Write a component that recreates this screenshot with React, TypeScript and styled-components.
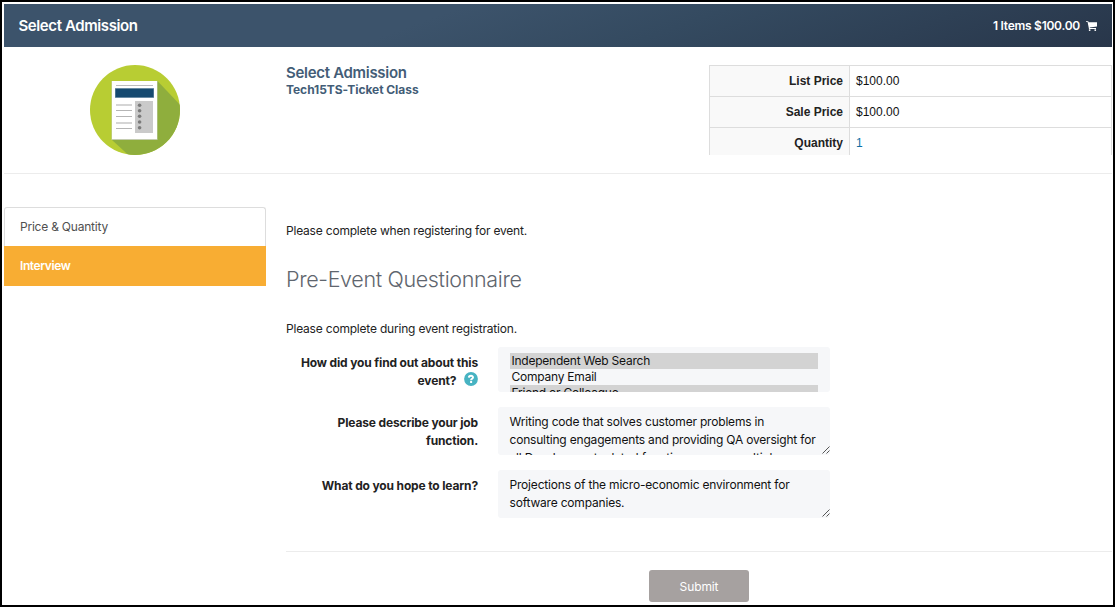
import React from "react";
import styled, { createGlobalStyle } from "styled-components";

const Global = createGlobalStyle`
  * { box-sizing: border-box; }
  html, body { margin: 0; padding: 0; }
  body {
    background: #fff;
    color: #222;
    font-family: Inter, "Liberation Sans", sans-serif;
    font-size: 12px;
    line-height: 18px;
    overflow: hidden;
  }
`;

const Frame = styled.div`
  width: 1115px;
  height: 607px;
  border: 2px solid #000;
  padding: 2px 1px 0 2px;
  overflow: hidden;
`;

const Header = styled.header`
  display: flex;
  justify-content: space-between;
  align-items: center;
  width: 1108px;
  height: 43px;
  padding: 0 15px 0 14.5px;
  color: #fff;
  background: linear-gradient(160deg, #3c536b 0%, #3c536b 38%, #344a60 60%, #28364a 100%);
`;

const HeaderTitle = styled.h1`
  margin: 0;
  font-size: 15px;
  font-weight: 600;
  letter-spacing: -0.4px;
`;

const Cart = styled.div`
  display: flex;
  align-items: center;
  gap: 6px;
  font-size: 12px;
  font-weight: 600;
  letter-spacing: -0.26px;
`;

const Product = styled.section`
  display: grid;
  grid-template-columns: 282px 1fr 403px;
  height: 127px;
  padding-top: 18px;
  border-bottom: 1px solid #ececec;
`;

const Badge = styled.svg`
  display: block;
  margin-left: 86px;
`;

const ProductName = styled.h2`
  margin: -1px 0 0;
  color: #435d77;
  font-size: 15px;
  line-height: 18px;
  font-weight: 600;
  letter-spacing: -0.3px;
`;

const ProductClass = styled.div`
  color: #435d77;
  font-size: 12px;
  line-height: 16px;
  font-weight: 700;
  letter-spacing: -0.05px;
`;

const PriceTable = styled.div`
  height: 90px;
  overflow: hidden;
  border: 1px solid #ddd;
  border-bottom: 0;
  font-family: "Liberation Sans", Arial, sans-serif;
  font-size: 12px;
`;

const PriceRow = styled.div`
  display: grid;
  grid-template-columns: 140px 1fr;
  height: 31px;
  line-height: 30px;
  border-bottom: 1px solid #ddd;
`;

const PriceLabel = styled.div`
  padding-right: 6px;
  text-align: right;
  font-weight: 700;
  background: #f9f9f9;
  border-right: 1px solid #ddd;
`;

const PriceValue = styled.div<{ $link?: boolean }>`
  padding-left: 6px;
  color: ${(p) => (p.$link ? "#0d6fa5" : "#111")};
`;

const Body = styled.div`
  display: grid;
  grid-template-columns: 262px 1fr;
  column-gap: 20px;
  padding-top: 33px;
`;

const Nav = styled.nav`
  display: flex;
  flex-direction: column;
`;

const NavItem = styled.div<{ $active?: boolean }>`
  height: ${(p) => (p.$active ? 40 : 39)}px;
  padding-left: ${(p) => (p.$active ? 16 : 15)}px;
  line-height: ${(p) => (p.$active ? 39 : 37)}px;
  letter-spacing: ${(p) => (p.$active ? -0.4 : -0.22)}px;
  color: ${(p) => (p.$active ? "#fff" : "#505050")};
  font-weight: ${(p) => (p.$active ? 600 : 400)};
  background: ${(p) => (p.$active ? "#f8ad33" : "#fff")};
  border: ${(p) => (p.$active ? "0" : "1px solid #ddd")};
  border-bottom: 0;
  border-radius: ${(p) => (p.$active ? "0" : "3px 3px 0 0")};
`;

const Content = styled.main`
  padding-top: 15px;
`;

const Note = styled.p`
  margin: 0;
  letter-spacing: -0.2px;
`;

const Heading = styled.h3`
  margin: 22px 0 24px;
  color: #5f666e;
  font-size: 21.5px;
  line-height: 34px;
  font-weight: 300;
  letter-spacing: -0.35px;
`;

const Form = styled.div`
  display: grid;
  grid-template-columns: 192px 332px;
  column-gap: 20px;
  row-gap: 15px;
  margin-top: 9px;
`;

const Label = styled.label`
  padding-top: 7px;
  text-align: right;
  font-weight: 700;
  letter-spacing: -0.15px;
`;

const Help = styled.svg`
  margin-left: 5px;
  vertical-align: -1px;
`;

const MultiSelect = styled.div`
  height: 45px;
  padding: 6px 12px 0;
  overflow: hidden;
  color: #111;
  background: #f6f7f9;
  border-radius: 3px;
`;

const Option = styled.div<{ $selected?: boolean }>`
  height: 16px;
  padding-left: 1.5px;
  line-height: 16px;
  letter-spacing: -0.23px;
  background: ${(p) => (p.$selected ? "#d3d3d3" : "transparent")};
`;

const TextBox = styled.div`
  position: relative;
  height: 48px;
  padding: 6px 0 0 11.5px;
  overflow: hidden;
  white-space: pre;
  color: #111;
  letter-spacing: -0.19px;
  background: #f6f7f9;
  border-radius: 3px;
`;

const Grip = styled.svg`
  position: absolute;
  right: 0;
  bottom: 1px;
`;

const Actions = styled.div`
  display: flex;
  margin-top: 33px;
  padding: 18px 0 0 363px;
  border-top: 1px solid #ececec;
`;

const Submit = styled.button`
  width: 100px;
  height: 32px;
  padding: 0;
  border: 0;
  border-radius: 3px;
  color: #fff;
  background: #a6a1a0;
  font: 400 12px Inter, "Liberation Sans", sans-serif;
  letter-spacing: -0.1px;
`;

const ResizeGrip = () => (
  <Grip width="8" height="8" viewBox="0 0 8 8" stroke="#555" strokeWidth="1">
    <path d="M0.5 7.5L7.5 0.5M4.5 7.5L7.5 4.5" />
  </Grip>
);

const prices = [
  { label: "List Price", value: "$100.00" },
  { label: "Sale Price", value: "$100.00" },
  { label: "Quantity", value: "1", link: true },
];

export default function App() {
  return (
    <>
      <Global />
      <Frame>
        <Header>
          <HeaderTitle>Select Admission</HeaderTitle>
          <Cart>
            <span>1 Items $100.00</span>
            <svg width="11" height="10" viewBox="0 0 11 10" fill="#fff">
              <path d="M0 .2h2.3l.3 1H11v4.3L3.7 6.4l.2.7H10v.9H3L1.6 1.1H0z" />
              <rect x="2.8" y="8.2" width="1.7" height="1.7" rx=".6" />
              <rect x="8.4" y="8.2" width="1.7" height="1.7" rx=".6" />
            </svg>
          </Cart>
        </Header>

        <Product>
          <Badge width="90" height="90" viewBox="0 0 90 90">
            <defs>
              <clipPath id="disc">
                <circle cx="45" cy="45" r="45" />
              </clipPath>
            </defs>
            <circle cx="45" cy="45" r="45" fill="#b8cd33" />
            <path clipPath="url(#disc)" d="M67.5 16L97 47V97H46L22 75z" fill="#8fae3d" />
            <rect x="21.5" y="16" width="46" height="59" fill="#c5cdb0" />
            <rect x="22" y="16" width="45" height="58" fill="#fff" />
            <path d="M26 20.5h37" stroke="#bcbcbc" />
            <rect x="25" y="23" width="39" height="10" fill="#7f9cb2" />
            <rect x="25.5" y="23.8" width="38" height="8.4" fill="#164a70" />
            <path d="M26 45.5h16M26 51.5h16M26 63.5h16" stroke="#b5b5b5" />
            <path d="M26 40h16M26 58h16" stroke="#d5d5d5" strokeWidth="2" />
            <rect x="45" y="36" width="18" height="32" fill="#cacaca" />
            <g fill="#7b7b7b">
              <circle cx="49.6" cy="40.3" r="1.8" />
              <circle cx="49.6" cy="45.7" r="1.8" />
              <circle cx="49.6" cy="51.2" r="1.8" />
              <circle cx="49.6" cy="57" r="1.8" />
              <circle cx="49.6" cy="62.8" r="1.8" />
            </g>
          </Badge>
          <div>
            <ProductName>Select Admission</ProductName>
            <ProductClass>Tech15TS-Ticket Class</ProductClass>
          </div>
          <PriceTable>
            {prices.map((p) => (
              <PriceRow key={p.label}>
                <PriceLabel>{p.label}</PriceLabel>
                <PriceValue $link={p.link}>{p.value}</PriceValue>
              </PriceRow>
            ))}
          </PriceTable>
        </Product>

        <Body>
          <Nav>
            <NavItem>Price &amp; Quantity</NavItem>
            <NavItem $active>Interview</NavItem>
          </Nav>
          <Content>
            <Note>Please complete when registering for event.</Note>
            <Heading>Pre-Event Questionnaire</Heading>
            <Note>Please complete during event registration.</Note>
            <Form>
              <Label>
                How did you find out about this
                <br />
                event?{" "}
                <Help width="14" height="14" viewBox="0 0 14 14">
                  <circle cx="7" cy="7" r="6.9" fill="#47b3c2" />
                  <path
                    d="M4.9 5.6C5 3.2 9.1 3.3 9 5.5C8.9 6.8 7.1 6.7 7.1 8.2M7.1 9V11"
                    fill="none"
                    stroke="#fff"
                    strokeWidth="2"
                  />
                </Help>
              </Label>
              <MultiSelect>
                <Option $selected>Independent Web Search</Option>
                <Option>Company Email</Option>
                <Option $selected>Friend or Colleague</Option>
              </MultiSelect>
              <Label>
                Please describe your job
                <br />
                function.
              </Label>
              <TextBox>
                {"Writing code that solves customer problems in\nconsulting engagements and providing QA oversight for\nall Development related functions across multiple"}
                <ResizeGrip />
              </TextBox>
              <Label>What do you hope to learn?</Label>
              <TextBox>
                {"Projections of the micro-economic environment for\nsoftware companies."}
                <ResizeGrip />
              </TextBox>
            </Form>
            <Actions>
              <Submit>Submit</Submit>
            </Actions>
          </Content>
        </Body>
      </Frame>
    </>
  );
}
